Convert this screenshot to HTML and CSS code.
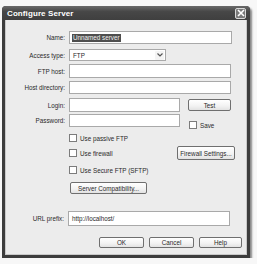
FILE: index.html
```html
<!DOCTYPE html>
<html>
<head>
<meta charset="utf-8">
<link rel="stylesheet" href="styles.css">
</head>
<body>
<div class="window">
  <div class="titlebar">
    <span class="title">Configure Server</span>
    <span class="close"><svg width="8" height="8" viewBox="0 0 8 8"><path d="M1 1L7 7M7 1L1 7" stroke="#fff" stroke-width="1.6"/></svg></span>
  </div>
  <div class="content">
    <div class="row r-name">
      <span class="lbl">Name:</span>
      <span class="input w-full name-input"><span class="sel">Unnamed server</span></span>
    </div>
    <div class="row r-access">
      <span class="lbl">Access type:</span>
      <span class="input select"><span class="val">FTP</span><span class="arrow"><svg width="6" height="4" viewBox="0 0 6 4"><path d="M0.5 0.5L3 3L5.5 0.5" fill="none" stroke="#555" stroke-width="1.2"/></svg></span></span>
    </div>
    <div class="row r-ftp">
      <span class="lbl">FTP host:</span>
      <span class="input w-wide h14"></span>
    </div>
    <div class="row r-dir">
      <span class="lbl">Host directory:</span>
      <span class="input w-wide"></span>
    </div>
    <div class="row r-login">
      <span class="lbl">Login:</span>
      <span class="input w-short h14"></span>
      <span class="btn btn-test">Test</span>
    </div>
    <div class="row r-pass">
      <span class="lbl">Password:</span>
      <span class="input w-short"></span>
      <span class="check save"><span class="box"></span>Save</span>
    </div>
    <div class="row r-passive">
      <span class="lbl"></span>
      <span class="check"><span class="box"></span>Use passive FTP</span>
    </div>
    <div class="row r-firewall">
      <span class="lbl"></span>
      <span class="check grow"><span class="box"></span>Use firewall</span>
      <span class="btn btn-fw">Firewall Settings...</span>
    </div>
    <div class="row r-secure">
      <span class="lbl"></span>
      <span class="check"><span class="box"></span>Use Secure FTP (SFTP)</span>
    </div>
    <div class="row r-compat">
      <span class="lbl"></span>
      <span class="btn btn-compat">Server Compatibility...</span>
    </div>
    <div class="row r-url">
      <span class="lbl lbl-url">URL prefix:</span>
      <span class="input w-url">http://localhost/</span>
    </div>
    <div class="row r-buttons">
      <span class="btn btn-dlg">OK</span>
      <span class="btn btn-dlg">Cancel</span>
      <span class="btn btn-dlg btn-help">Help</span>
    </div>
  </div>
</div>
</body>
</html>
```
FILE: styles.css
```css
html, body {
  margin: 0;
  padding: 0;
  background: #f7f7f7;
}
body {
  font-family: "Liberation Sans", Arial, sans-serif;
  font-size: 6.3px;
  color: #2a2a2a;
}
.window {
  margin: 6px 0 0 2px;
  width: 248px;
  height: 252px;
  box-sizing: border-box;
  display: flex;
  flex-direction: column;
  background: #3d3d3d;
  border-radius: 4px 4px 0 0;
  box-shadow: 2px 2px 2px rgba(0,0,0,0.45);
}
.titlebar {
  height: 14px;
  flex: none;
  display: flex;
  align-items: center;
  padding: 0 4px 0 5px;
  background: linear-gradient(#6a6a6a, #474747 40%, #3f3f3f);
  border-radius: 4px 4px 0 0;
}
.title {
  flex: 1;
  color: #fff;
  font-weight: bold;
  font-size: 8px;
  letter-spacing: 0.1px;
}
.close {
  width: 11px;
  height: 11px;
  box-sizing: border-box;
  border: 1px solid #d8d8d8;
  border-radius: 2px;
  background: #7a7a7a;
  display: flex;
  align-items: center;
  justify-content: center;
}
.close svg { display: block; }
.content {
  flex: 1;
  margin: 0 3px 3px 3px;
  background: #ececec;
  border: 1px solid #c9c9c9;
  border-top: none;
  box-sizing: border-box;
  display: flex;
  flex-direction: column;
}
.row {
  display: flex;
  align-items: center;
  flex: none;
}
.lbl {
  width: 59px;
  margin-right: 4px;
  text-align: right;
  flex: none;
}
.input {
  height: 13px;
  box-sizing: border-box;
  background: #fff;
  border: 1px solid #a9a9a9;
  display: flex;
  align-items: center;
  padding-left: 2px;
  flex: none;
}
.h14 { height: 14px; }
.w-full { width: 163px; }
.w-wide { width: 162px; }
.w-short { width: 111px; }
.w-url { width: 162px; height: 15px; margin-left: -1px; padding-left: 3px; }
.sel {
  background: #4e4e4e;
  color: #f2f2f2;
  padding: 0 1px;
  line-height: 8px;
}
.select {
  width: 97px;
  height: 12px;
  padding-left: 3px;
  padding-right: 1px;
}
.select .val { flex: 1; }
.select .arrow {
  width: 9px;
  height: 9px;
  display: flex;
  align-items: center;
  justify-content: center;
  background: #f4f4f4;
  border-radius: 1px;
}
.select svg { display: block; }
.btn {
  box-sizing: border-box;
  border: 1px solid #6f6f6f;
  border-radius: 2px;
  background: linear-gradient(#ffffff, #f2f2f2 60%, #e2e2e2);
  display: flex;
  align-items: center;
  justify-content: center;
  flex: none;
  color: #2a2a2a;
}
.btn-test { width: 43px; height: 12px; margin-left: 8px; }
.check {
  display: flex;
  align-items: center;
  flex: none;
}
.check .box {
  width: 8px;
  height: 8px;
  box-sizing: border-box;
  border: 1px solid #7c7c7c;
  background: #fff;
  margin-right: 3px;
}
.save { margin-left: 9px; align-self: flex-end; margin-bottom: -2px; }
.grow { flex: 1; }
.btn-fw { width: 58px; height: 14px; margin-right: 11px; }
.btn-compat { width: 77px; height: 12px; margin-left: 1px; }
.r-name { margin-top: 11px; }
.r-access { margin-top: 5px; }
.r-ftp { margin-top: 3px; }
.r-dir { margin-top: 3px; }
.r-login { margin-top: 4px; }
.r-pass { margin-top: 2px; }
.r-passive { margin-top: 7px; }
.r-firewall { margin-top: 4px; }
.r-secure { margin-top: 6px; }
.r-compat { margin-top: 8px; }
.r-url { margin-top: 17px; }
.lbl-url { width: 58px; margin-right: 5px; }
.r-buttons {
  margin-top: 11px;
  padding-left: 93px;
  gap: 5px;
}
.btn-dlg { width: 45px; height: 11px; }
.btn-help { width: 43px; }
```
